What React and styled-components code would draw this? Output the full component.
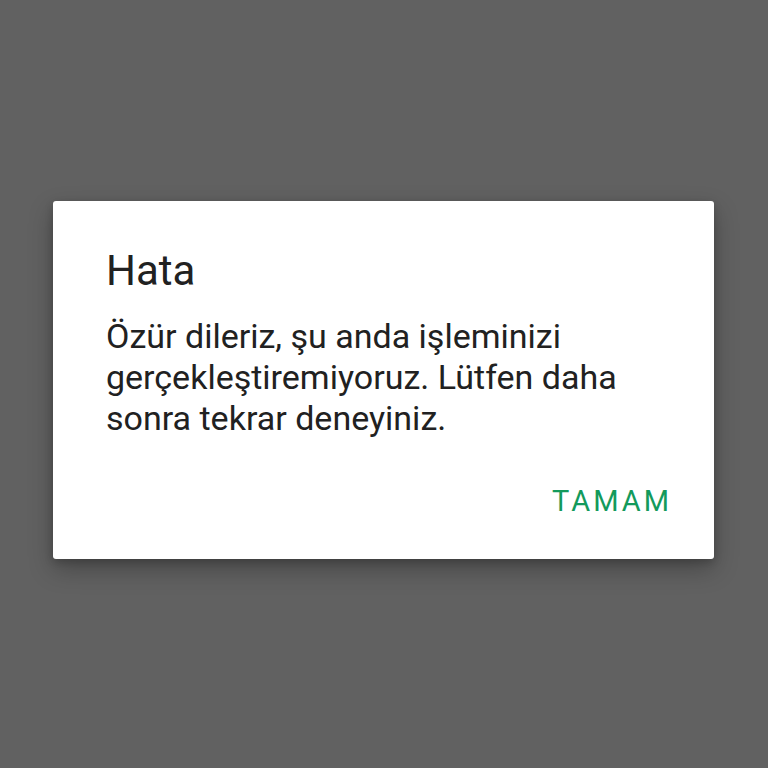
import React from "react";
import styled, { createGlobalStyle } from "styled-components";

const Global = createGlobalStyle`
  html, body { margin: 0; padding: 0; background: #616161; }
  body { font-family: Roboto, "Noto Sans", "Liberation Sans", sans-serif; }
`;

const Screen = styled.div`
  width: 768px;
  height: 768px;
  box-sizing: border-box;
  padding: 201px 54px 0 53px;
  background: #616161;
`;

const Dialog = styled.div`
  box-sizing: border-box;
  height: 358px;
  background: #ffffff;
  border-radius: 3px;
  box-shadow: 0 10px 24px rgba(0, 0, 0, 0.28), 0 3px 8px rgba(0, 0, 0, 0.18);
  padding: 46px 45px 0 53px;
  display: flex;
  flex-direction: column;
`;

const Title = styled.h2`
  margin: 0;
  font-size: 42px;
  line-height: 48px;
  font-weight: 400;
  color: #212121;
`;

const Message = styled.p`
  margin: 21px 0 0;
  font-size: 34px;
  line-height: 41px;
  font-weight: 400;
  color: #212121;
`;

const Actions = styled.div`
  margin-top: 44px;
  display: flex;
  justify-content: flex-end;
`;

const Button = styled.button`
  border: none;
  background: transparent;
  padding: 0;
  font-family: inherit;
  font-size: 29px;
  line-height: 36px;
  font-weight: 400;
  letter-spacing: 3px;
  color: #139a5c;
  margin-right: -3px;
  cursor: pointer;
`;

export default function App() {
  return (
    <>
      <Global />
      <Screen>
        <Dialog>
          <Title>Hata</Title>
          <Message>
            Özür dileriz, şu anda işleminizi gerçekleştiremiyoruz. Lütfen daha
            sonra tekrar deneyiniz.
          </Message>
          <Actions>
            <Button>TAMAM</Button>
          </Actions>
        </Dialog>
      </Screen>
    </>
  );
}
